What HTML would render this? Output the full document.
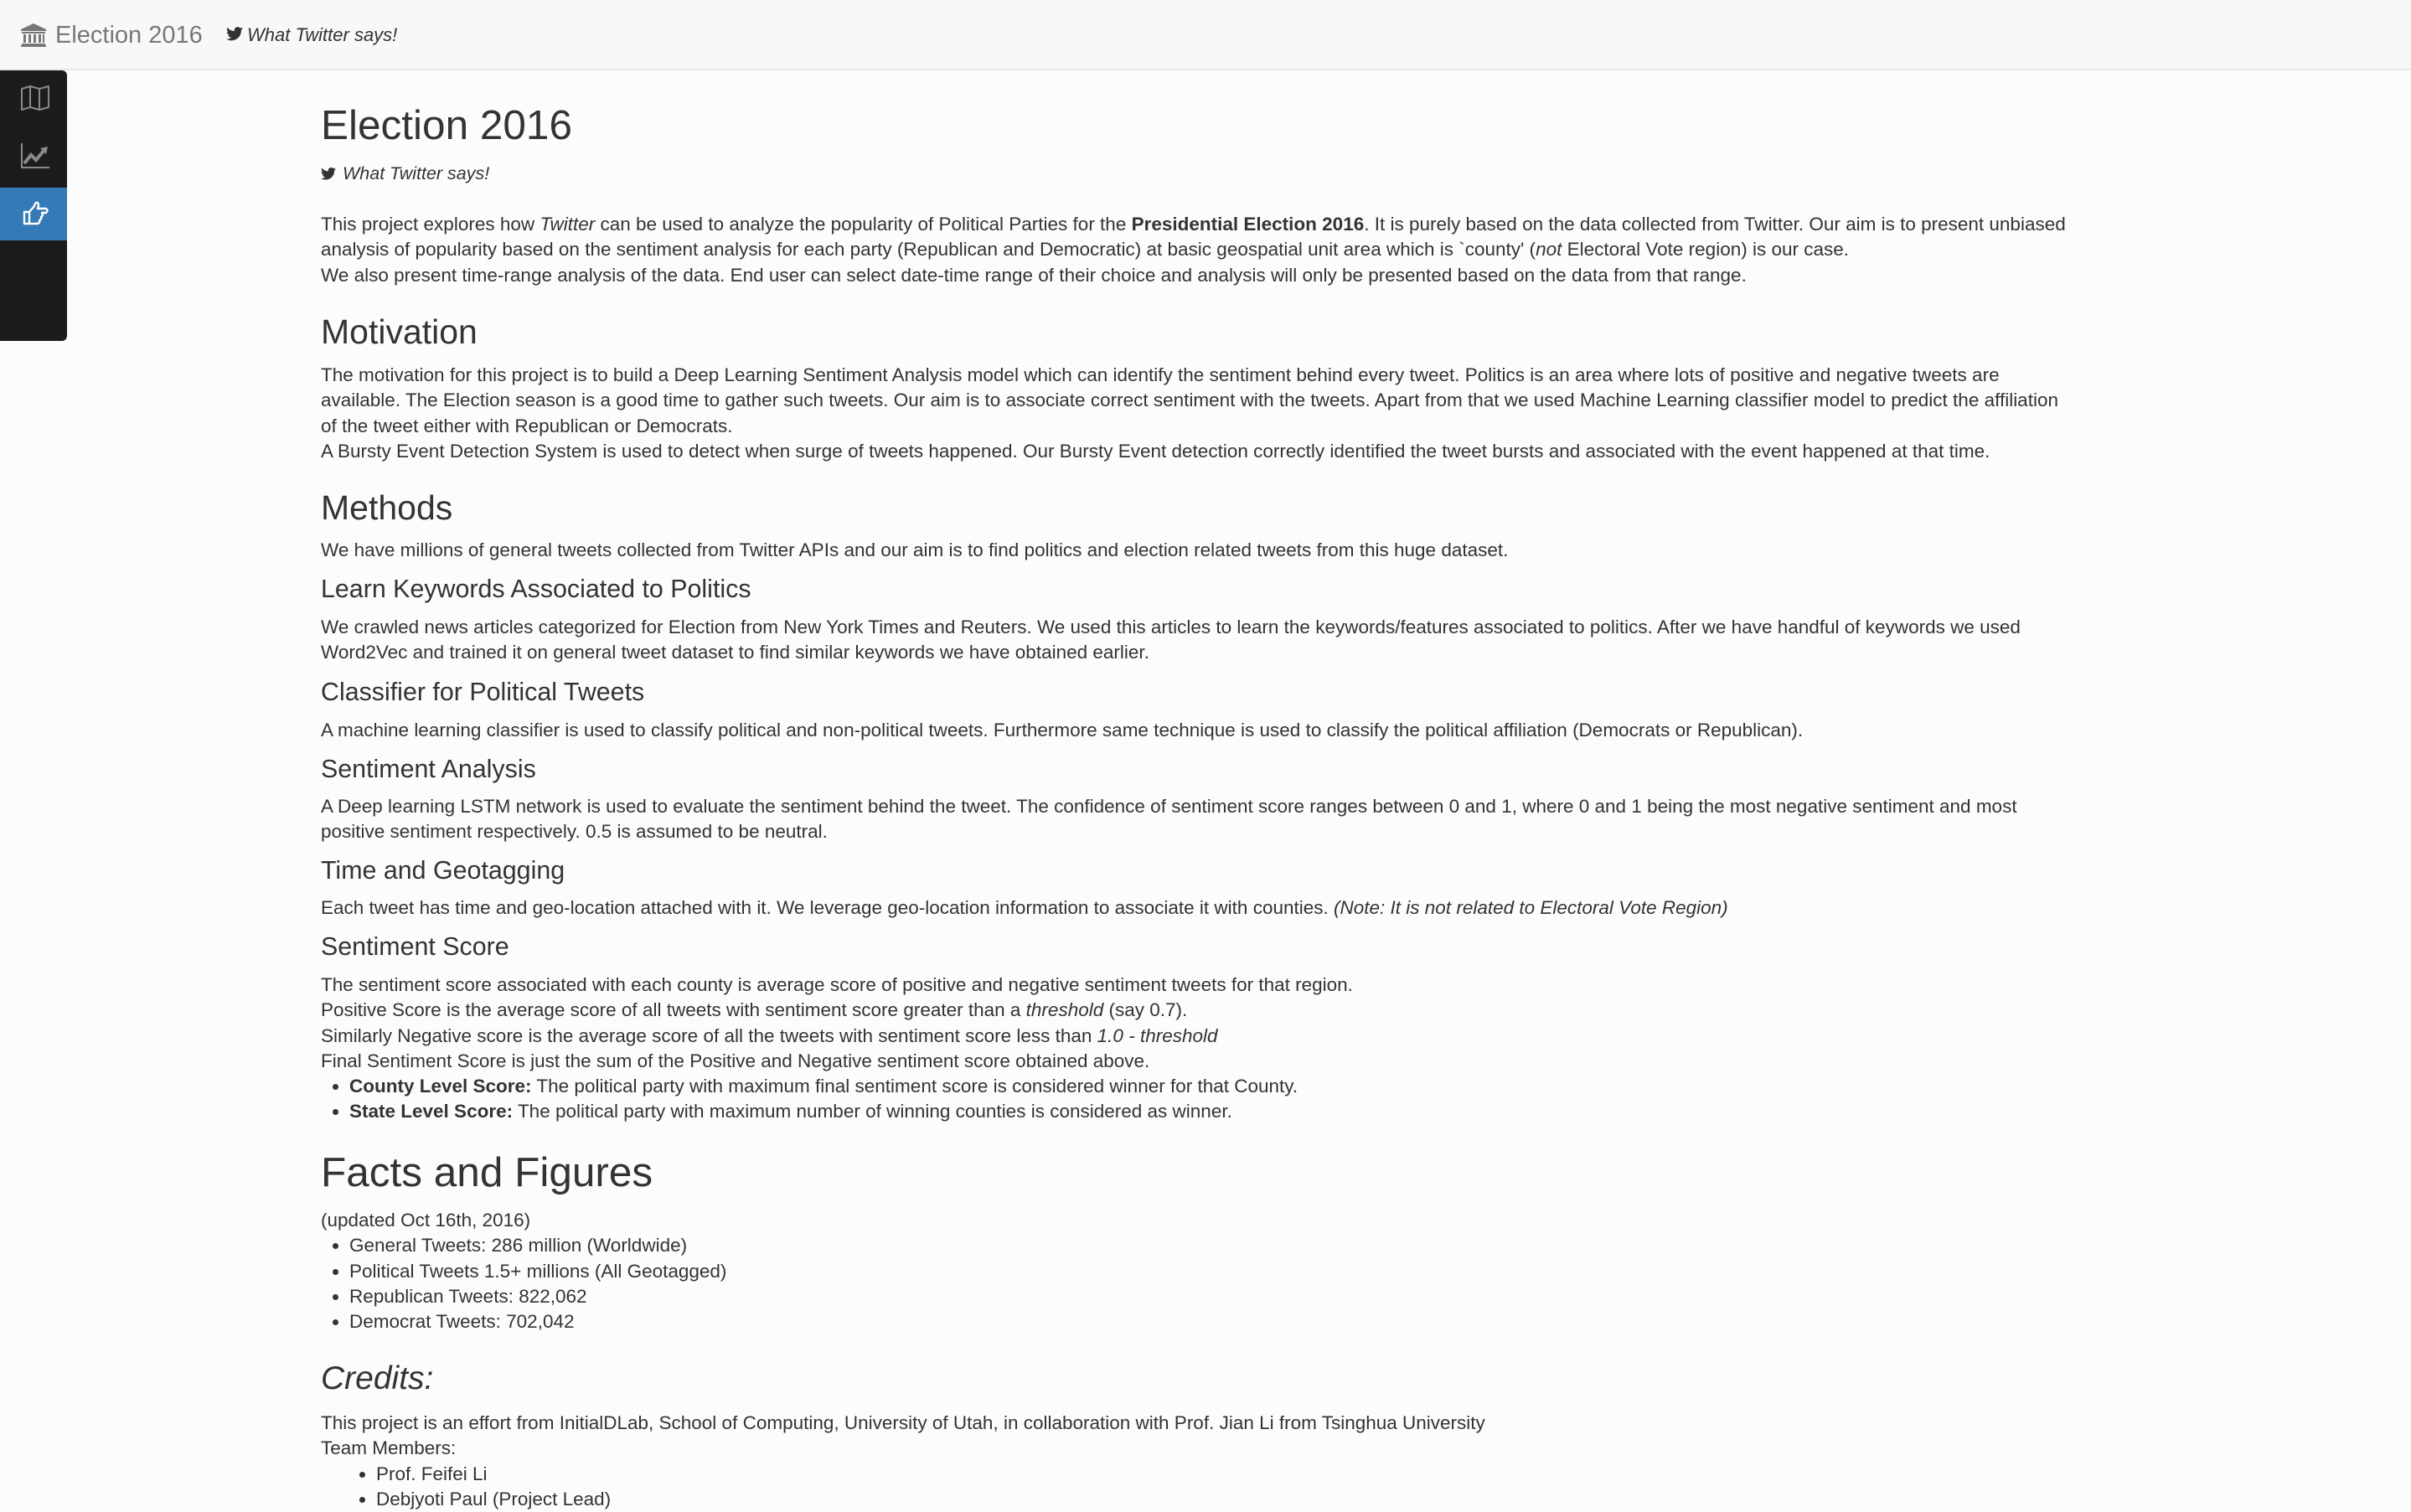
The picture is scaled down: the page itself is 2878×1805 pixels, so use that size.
<!DOCTYPE html>
<html><head><meta charset="utf-8">
<style>
html,body{margin:0;padding:0;width:2878px;height:1800px;overflow:hidden;background:#fcfcfc;font-family:"Liberation Sans",Arial,sans-serif;color:#333;}
.nav{position:absolute;left:0;top:0;width:2878px;height:82px;background:#f8f8f8;border-bottom:2px solid #e7e7e7;}
.brand{position:absolute;left:66px;top:22px;font-size:29px;color:#777;line-height:40px;}
.nsub{position:absolute;left:295px;top:25px;font-size:22px;font-style:italic;color:#333;line-height:34px;}
.side{position:absolute;left:0;top:84px;width:80px;height:323px;background:#1c1c1c;border-radius:0 6px 6px 0;}
.act{position:absolute;left:0;top:140px;width:80px;height:63px;background:#337ab7;}
.c{position:absolute;left:383px;width:2092px;font-size:22.5px;line-height:30.3px;}
.c p{margin:0}
h1,h2,h3{margin:0;font-weight:500;position:absolute;left:383px;white-space:nowrap;}
h1{font-size:49.5px;line-height:60px;}
h2{font-size:41px;line-height:50px;}
h3{font-size:30.4px;line-height:40px;}
ul{margin:0;padding-left:34px;}
i{font-style:italic}
</style></head><body>
<div class="nav">
  <svg style="position:absolute;left:24px;top:27px" width="32" height="30" viewBox="0 0 32 30"><path d="M16 1 L31 8 V10 H1 V8 Z" fill="#777"/><rect x="2" y="11" width="28" height="2" fill="#777"/><rect x="4" y="14" width="3" height="10" fill="#777"/><rect x="10" y="14" width="3" height="10" fill="#777"/><rect x="16" y="14" width="3" height="10" fill="#777"/><rect x="22" y="14" width="3" height="10" fill="#777"/><rect x="27" y="14" width="2" height="10" fill="#777"/><rect x="2" y="25" width="28" height="2" fill="#777"/><rect x="1" y="27" width="30" height="2" fill="#777"/></svg>
  <div class="brand">Election 2016</div>
  <svg style="position:absolute;left:270px;top:32px" width="20" height="17" viewBox="0 0 24 20"><path d="M24 2.4a9.8 9.8 0 0 1-2.8.8A4.9 4.9 0 0 0 23.3.4a9.9 9.9 0 0 1-3.1 1.2A4.9 4.9 0 0 0 11.8 6 14 14 0 0 1 1.7.9a4.9 4.9 0 0 0 1.5 6.6A4.9 4.9 0 0 1 1 6.9a4.9 4.9 0 0 0 3.9 4.8 4.9 4.9 0 0 1-2.2.1 4.9 4.9 0 0 0 4.6 3.4A9.9 9.9 0 0 1 0 17.2 14 14 0 0 0 7.5 19.4c9.1 0 14-7.5 14-14v-.6A10 10 0 0 0 24 2.4z" fill="#333"/></svg>
  <div class="nsub">What Twitter says!</div>
</div>
<div class="side">
  <svg style="position:absolute;left:24px;top:17px" width="36" height="32" viewBox="0 0 36 32"><path d="M2 5 L12 2 L23 5 L34 2 V27 L23 30 L12 27 L2 30 Z M12 2 V27 M23 5 V30" fill="none" stroke="#8a8a8a" stroke-width="2" stroke-linejoin="round"/></svg>
  <svg style="position:absolute;left:24px;top:86px" width="36" height="32" viewBox="0 0 36 32"><path d="M2 1 V30 H35" fill="none" stroke="#8a8a8a" stroke-width="2"/><path d="M5 25 L13 15 L19 21 L28 10" fill="none" stroke="#8a8a8a" stroke-width="4"/><path d="M24 7 L33 5 L31 14 Z" fill="#8a8a8a"/></svg>
  <div class="act">
    <svg style="position:absolute;left:25px;top:15px" width="34" height="32" viewBox="0 0 34 32"><path d="M4 14 H10 L16 7 Q17 2 20 3 Q22 5 20 10 H30 Q33 12 30 15 H25 Q27 18 24 20 Q25 23 22 24 Q23 27 20 28 H10 L4 28 Z M10 14 V28" fill="none" stroke="#fff" stroke-width="2.4" stroke-linejoin="round"/></svg>
  </div>
</div>

<h1 style="top:120px">Election 2016</h1>
<div class="c" style="top:192px;font-style:italic;font-size:21.5px"><svg width="18" height="15" viewBox="0 0 24 20" style="vertical-align:-1px;margin-right:8px"><path d="M24 2.4a9.8 9.8 0 0 1-2.8.8A4.9 4.9 0 0 0 23.3.4a9.9 9.9 0 0 1-3.1 1.2A4.9 4.9 0 0 0 11.8 6 14 14 0 0 1 1.7.9a4.9 4.9 0 0 0 1.5 6.6A4.9 4.9 0 0 1 1 6.9a4.9 4.9 0 0 0 3.9 4.8 4.9 4.9 0 0 1-2.2.1 4.9 4.9 0 0 0 4.6 3.4A9.9 9.9 0 0 1 0 17.2 14 14 0 0 0 7.5 19.4c9.1 0 14-7.5 14-14v-.6A10 10 0 0 0 24 2.4z" fill="#333"/></svg>What Twitter says!</div>
<div class="c" style="top:253px"><p>This project explores how <i>Twitter</i> can be used to analyze the popularity of Political Parties for the <b>Presidential Election 2016</b>. It is purely based on the data collected from Twitter. Our aim is to present unbiased analysis of popularity based on the sentiment analysis for each party (Republican and Democratic) at basic geospatial unit area which is `county' (<i>not</i> Electoral Vote region) is our case.<br>We also present time-range analysis of the data. End user can select date-time range of their choice and analysis will only be presented based on the data from that range.</p></div>

<h2 style="top:371px">Motivation</h2>
<div class="c" style="top:433px"><p>The motivation for this project is to build a Deep Learning Sentiment Analysis model which can identify the sentiment behind every tweet. Politics is an area where lots of positive and negative tweets are available. The Election season is a good time to gather such tweets. Our aim is to associate correct sentiment with the tweets. Apart from that we used Machine Learning classifier model to predict the affiliation of the tweet either with Republican or Democrats.<br>A Bursty Event Detection System is used to detect when surge of tweets happened. Our Bursty Event detection correctly identified the tweet bursts and associated with the event happened at that time.</p></div>

<h2 style="top:581px">Methods</h2>
<div class="c" style="top:642px"><p>We have millions of general tweets collected from Twitter APIs and our aim is to find politics and election related tweets from this huge dataset.</p></div>
<h3 style="top:683px">Learn Keywords Associated to Politics</h3>
<div class="c" style="top:734px"><p>We crawled news articles categorized for Election from New York Times and Reuters. We used this articles to learn the keywords/features associated to politics. After we have handful of keywords we used Word2Vec and trained it on general tweet dataset to find similar keywords we have obtained earlier.</p></div>
<h3 style="top:806px">Classifier for Political Tweets</h3>
<div class="c" style="top:857px"><p>A machine learning classifier is used to classify political and non-political tweets. Furthermore same technique is used to classify the political affiliation (Democrats or Republican).</p></div>
<h3 style="top:898px">Sentiment Analysis</h3>
<div class="c" style="top:948px"><p>A Deep learning LSTM network is used to evaluate the sentiment behind the tweet. The confidence of sentiment score ranges between 0 and 1, where 0 and 1 being the most negative sentiment and most positive sentiment respectively. 0.5 is assumed to be neutral.</p></div>
<h3 style="top:1019px">Time and Geotagging</h3>
<div class="c" style="top:1069px"><p>Each tweet has time and geo-location attached with it. We leverage geo-location information to associate it with counties. <i>(Note: It is not related to Electoral Vote Region)</i></p></div>
<h3 style="top:1110px">Sentiment Score</h3>
<div class="c" style="top:1161px"><p>The sentiment score associated with each county is average score of positive and negative sentiment tweets for that region.<br>Positive Score is the average score of all tweets with sentiment score greater than a <i>threshold</i> (say 0.7).<br>Similarly Negative score is the average score of all the tweets with sentiment score less than <i>1.0 - threshold</i><br>Final Sentiment Score is just the sum of the Positive and Negative sentiment score obtained above.</p>
<ul><li><b>County Level Score:</b> The political party with maximum final sentiment score is considered winner for that County.</li><li><b>State Level Score:</b> The political party with maximum number of winning counties is considered as winner.</li></ul></div>

<h1 style="top:1370px">Facts and Figures</h1>
<div class="c" style="top:1442px"><p>(updated Oct 16th, 2016)</p>
<ul><li>General Tweets: 286 million (Worldwide)</li><li>Political Tweets 1.5+ millions (All Geotagged)</li><li>Republican Tweets: 822,062</li><li>Democrat Tweets: 702,042</li></ul></div>

<h2 style="top:1621px;font-style:italic;font-size:39px">Credits:</h2>
<div class="c" style="top:1684px"><p>This project is an effort from InitialDLab, School of Computing, University of Utah, in collaboration with Prof. Jian Li from Tsinghua University<br>Team Members:</p>
<ul style="padding-left:66px"><li>Prof. Feifei Li</li><li>Debjyoti Paul (Project Lead)</li></ul></div>
</body></html>
